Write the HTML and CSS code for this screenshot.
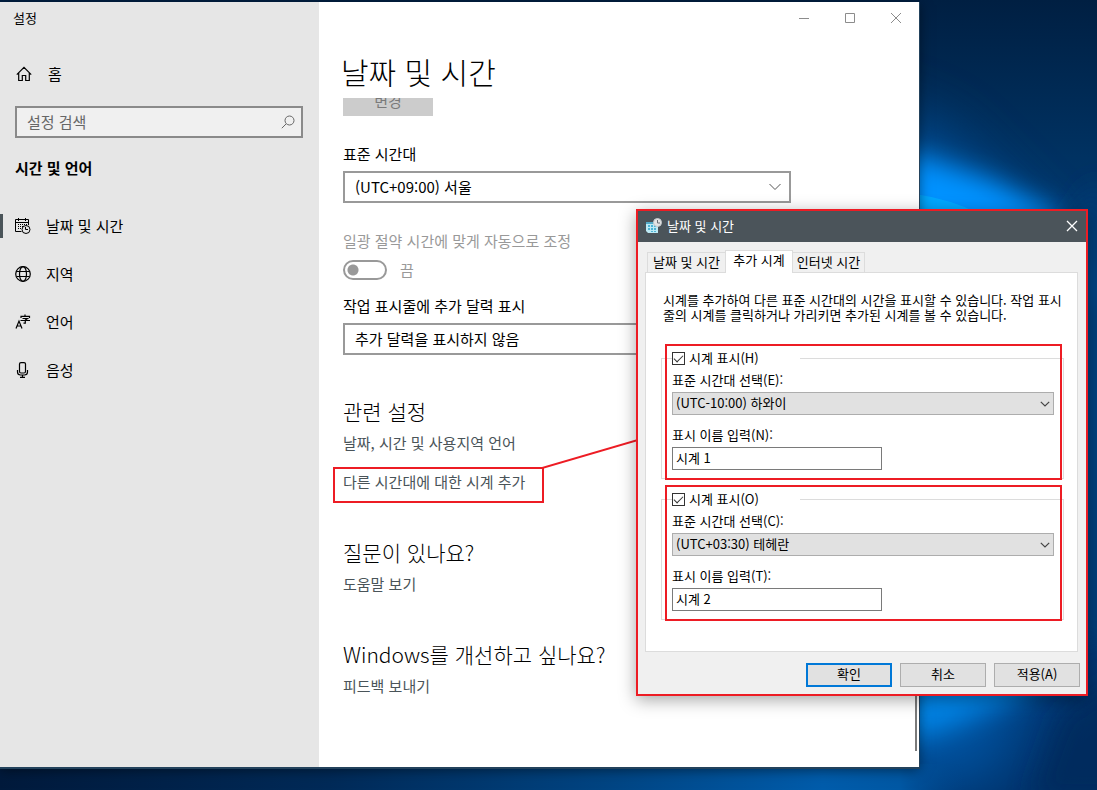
FILE: index.html
```html
<!DOCTYPE html>
<html lang="ko">
<head>
<meta charset="utf-8">
<title>설정</title>
<link rel="stylesheet" href="styles.css">
</head>
<body>
<div class="desktop">
  <svg class="wallpaper" viewBox="0 0 1097 790" preserveAspectRatio="none" aria-hidden="true">
    <defs>
      <linearGradient id="sky" x1="0" y1="0" x2="0" y2="1">
        <stop offset="0" stop-color="#001f42"/><stop offset=".2" stop-color="#003262"/><stop offset=".5" stop-color="#004487"/><stop offset="1" stop-color="#00326a"/>
      </linearGradient>
      <linearGradient id="floor" x1="0" y1="0" x2="1" y2="0">
        <stop offset="0" stop-color="#001a3c"/><stop offset=".3" stop-color="#002a58"/><stop offset=".55" stop-color="#004482"/><stop offset=".75" stop-color="#005cab"/><stop offset=".82" stop-color="#0058a4"/><stop offset=".88" stop-color="#00458a" stop-opacity="0"/>
      </linearGradient>
      <filter id="soft" x="-50%" y="-100%" width="200%" height="300%"><feGaussianBlur stdDeviation="13"/></filter>
      <filter id="wide" x="-50%" y="-100%" width="200%" height="300%"><feGaussianBlur stdDeviation="30"/></filter>
    </defs>
    <rect width="1097" height="790" fill="url(#sky)"/>
    <path d="M800 80L940 130L1060 250H800Z" fill="#0060b8" opacity=".6" filter="url(#wide)"/>
    <path d="M860 140L930 160L990 180L1060 215L1090 300H860Z" fill="#0092ff" filter="url(#soft)"/>
    <path d="M915 194Q950 199 980 214H915Z" fill="#00b0ff" opacity=".7"/>
    <path d="M1100 180V640L1060 640V240Z" fill="#00407c" filter="url(#soft)"/>
    <path d="M860 660H1065L1015 696L950 728L880 750Z" fill="#0096f8" filter="url(#soft)"/>
    <path d="M860 640H1040L1000 780L860 800Z" fill="#0070d0" opacity=".5" filter="url(#wide)"/>
    <path d="M1060 715L1130 670V800H1030Z" fill="#002654" opacity=".6" filter="url(#soft)"/>
    <rect y="764" width="1097" height="26" fill="url(#floor)"/>
  </svg>

  <main class="settings">
    <aside class="sidebar">
      <div class="app-name">설정</div>
      <a class="home" href="#">
        <svg width="16" height="16" viewBox="0 0 16 16"><path d="M.8 8.700L8 1.300L15.200 8.700M2.700 7V14.500H6.300V9.500H9.700V14.500H13.300V7" fill="none" stroke="currentColor" stroke-width="1.200"/></svg>
        <span>홈</span>
      </a>
      <label class="search">
        <input type="text" placeholder="설정 검색" aria-label="설정 검색">
        <svg width="14" height="14" viewBox="0 0 14 14"><circle cx="8.500" cy="5.500" r="4.500" fill="none" stroke="currentColor"/><path d="M5 9L.8 13.200" stroke="currentColor"/></svg>
      </label>
      <h2 class="group-name">시간 및 언어</h2>
      <nav class="nav">
        <a class="nav-item current" href="#">
          <svg width="16" height="16" viewBox="0 0 16 16" fill="none" stroke="currentColor"><path d="M6.500 13.500H.5V1.500H13.500V7M.5 4.500H13.500M3.500 0V3M10.500 0V3"/><path d="M3 6.500H12M3 8.500H8M3 10.500H6" stroke-dasharray="1 1"/><circle cx="11" cy="11.500" r="4"/><path d="M10.500 9V11.500H13"/></svg>
          <span>날짜 및 시간</span>
        </a>
        <a class="nav-item" href="#">
          <svg width="16" height="16" viewBox="0 0 16 16" fill="none" stroke="currentColor" stroke-width="1.200"><circle cx="8" cy="8" r="7.300"/><ellipse cx="8" cy="8" rx="3.500" ry="7.300"/><path d="M1.500 5.500H14.500M1.500 10.500H14.500"/></svg>
          <span>지역</span>
        </a>
        <a class="nav-item" href="#">
          <svg width="16" height="16" viewBox="0 0 16 16" fill="none" stroke="currentColor" stroke-width="1.200"><path d="M1 14.500L4 7L7 14.500M2 12H6"/><path d="M10 .5V2M6 4V2.300H14.500V4M7.500 4.500H12.500L10.300 6V9.200H8.500M5.500 6.500H15"/></svg>
          <span>언어</span>
        </a>
        <a class="nav-item" href="#">
          <svg width="16" height="16" viewBox="0 0 16 16" fill="none" stroke="currentColor" stroke-width="1.200"><rect x="4.500" y=".6" width="6" height="10.400" rx="1.500"/><path d="M2.500 8V10Q2.500 13 5.500 13H9.500Q12.500 13 12.500 10V8M7.500 13V15.500M5 15.400H10"/></svg>
          <span>음성</span>
        </a>
      </nav>
    </aside>

    <section class="page">
      <div class="window-buttons">
        <button type="button" aria-label="최소화"><svg width="10" height="10"><path d="M0 5.500H10" stroke="currentColor"/></svg></button>
        <button type="button" aria-label="최대화"><svg width="10" height="10"><path d="M.5.5H9.500V9.500H.5Z" fill="none" stroke="currentColor"/></svg></button>
        <button type="button" aria-label="닫기"><svg width="10" height="10"><path d="M0 0L10 10M10 0L0 10" stroke="currentColor"/></svg></button>
      </div>
      <div class="content">
        <h1>날짜 및 시간</h1>
        <div class="scrolled"><button type="button" class="change" disabled>변경</button></div>
        <label class="caption" for="zone">표준 시간대</label>
        <div class="picker">
          <select id="zone"><option>(UTC+09:00) 서울</option></select>
          <svg width="12" height="8" viewBox="0 0 12 8"><path d="M.5 1L6 6.500L11.500 1" fill="none" stroke="currentColor"/></svg>
        </div>
        <label class="caption muted" for="dst">일광 절약 시간에 맞게 자동으로 조정</label>
        <div class="switch-row"><input id="dst" class="switch" type="checkbox" disabled><span>끔</span></div>
        <label class="caption caption-calendar" for="calendar">작업 표시줄에 추가 달력 표시</label>
        <div class="picker">
          <select id="calendar"><option>추가 달력을 표시하지 않음</option></select>
          <svg width="12" height="8" viewBox="0 0 12 8"><path d="M.5 1L6 6.500L11.500 1" fill="none" stroke="currentColor"/></svg>
        </div>
        <h2 class="related">관련 설정</h2>
        <a class="link" href="#">날짜, 시간 및 사용지역 언어</a>
        <a class="link marked" href="#">다른 시간대에 대한 시계 추가</a>
        <h2 class="question">질문이 있나요?</h2>
        <a class="link" href="#">도움말 보기</a>
        <h2 class="improve">Windows를 개선하고 싶나요?</h2>
        <a class="link" href="#">피드백 보내기</a>
      </div>
      <div class="scroll-thumb"></div>
    </section>
  </main>

  <svg class="connector" width="96" height="30" viewBox="0 0 96 30" aria-hidden="true"><path d="M0 29L96 1" stroke="#ed1c24" stroke-width="2"/></svg>

  <section class="dialog" role="dialog" aria-labelledby="dialog-title">
    <header class="dialog-bar">
      <svg width="16" height="16" viewBox="0 0 16 16"><path d="M0 4H12V15H2L0 13Z" fill="#bdeaf5"/><path d="M0 4H10V6H0Z" fill="#52aac8"/><path d="M2 7H4V9H2ZM5 7H7V9H5ZM8 7H10V9H8ZM2 10H4V12H2ZM5 10H7V12H5ZM8 10H10V12H8ZM5 13H7V14H5ZM8 13H10V14H8Z" fill="#4db4d6"/><circle cx="11.500" cy="4.500" r="4" fill="#e4e4e4" stroke="#c4c9cc"/><path d="M11.500 2V5H14" fill="none" stroke="#687078"/></svg>
      <span id="dialog-title">날짜 및 시간</span>
      <button type="button" class="dialog-close" aria-label="닫기"><svg width="12" height="12" viewBox="0 0 12 12"><path d="M1 1L11 11M11 1L1 11" stroke="currentColor" stroke-width="1.300"/></svg></button>
    </header>
    <div class="dialog-body">
      <div class="tabs" role="tablist">
        <button type="button" role="tab" class="tab tab-first">날짜 및 시간</button>
        <button type="button" role="tab" class="tab active" aria-selected="true">추가 시계</button>
        <button type="button" role="tab" class="tab tab-last">인터넷 시간</button>
      </div>
      <div class="panel">
        <p>시계를 추가하여 다른 표준 시간대의 시간을 표시할 수 있습니다. 작업 표시<br>줄의 시계를 클릭하거나 가리키면 추가된 시계를 볼 수 있습니다.</p>
        <fieldset class="clock">
          <legend><label class="check"><input type="checkbox" checked>시계 표시(H)</label></legend>
          <label for="zone1">표준 시간대 선택(E):</label>
          <div class="combo"><select id="zone1"><option>(UTC-10:00) 하와이</option></select><svg width="10" height="6" viewBox="0 0 10 6"><path d="M.8.8L5 5L9.200.8" fill="none" stroke="currentColor" stroke-width="1.200"/></svg></div>
          <label class="name-label" for="name1">표시 이름 입력(N):</label>
          <input class="name" id="name1" type="text" value="시계 1">
        </fieldset>
        <fieldset class="clock">
          <legend><label class="check"><input type="checkbox" checked>시계 표시(O)</label></legend>
          <label for="zone2">표준 시간대 선택(C):</label>
          <div class="combo"><select id="zone2"><option>(UTC+03:30) 테헤란</option></select><svg width="10" height="6" viewBox="0 0 10 6"><path d="M.8.8L5 5L9.200.8" fill="none" stroke="currentColor" stroke-width="1.200"/></svg></div>
          <label class="name-label" for="name2">표시 이름 입력(T):</label>
          <input class="name" id="name2" type="text" value="시계 2">
        </fieldset>
      </div>
      <footer class="actions">
        <button type="button" class="default">확인</button>
        <button type="button">취소</button>
        <button type="button">적용(A)</button>
      </footer>
    </div>
  </section>
</div>
</body>
</html>
```

FILE: styles.css
```css
* { box-sizing: border-box; }
body {
  margin: 0;
  font: 15px/20px "Noto Sans CJK KR", sans-serif;
  color: #000;
}
button, input, select { font: inherit; color: inherit; margin: 0; }
button { padding: 0; }
a { color: inherit; text-decoration: none; }
h1, h2, p { margin: 0; font-weight: 400; }
svg { display: block; flex: none; }

.desktop {
  position: relative;
  display: flex;
  min-height: 100vh;
  padding: 2px 178px 23px 0;
  overflow: hidden;
}
.wallpaper { position: absolute; inset: 0; width: 100%; height: 100%; }

/* Settings window */
.settings {
  position: relative;
  display: flex;
  flex: 1;
  background: #fff;
  box-shadow: 0 1px 0 1px #23425c, 0 3px 12px rgba(0, 0, 0, .5);
}
.sidebar { width: 319px; flex: none; background: #e6e6e6; }
.app-name { padding: 6px 13px; font-size: 13px; }
.home {
  display: flex;
  align-items: center;
  gap: 16px;
  margin-top: 16px;
  padding: 0 16px;
  height: 48px;
}
.search {
  display: flex;
  align-items: center;
  height: 32px;
  margin: 8px 16px 0 15px;
  padding: 0 6px 0 10px;
  border: 2px solid #8a8a8a;
  background: #f0f0f0;
  color: #666;
}
.search input {
  flex: 1;
  min-width: 0;
  padding: 0;
  border: 0;
  outline: 0;
  background: none;
}
.search input::placeholder { color: #666; opacity: 1; }
.group-name { margin: 20px 15px 36px; font-size: 15px; line-height: 20px; font-weight: 700; }
.nav-item {
  display: flex;
  align-items: center;
  gap: 15px;
  height: 24px;
  margin-bottom: 24px;
  padding-left: 12px;
  border-left: 3px solid transparent;
}
.nav-item.current { border-color: #4a5459; }

.page { position: relative; flex: 1; min-width: 0; }
.window-buttons { display: flex; justify-content: flex-end; color: #8c8c8c; }
.window-buttons button {
  display: grid;
  place-items: center;
  width: 46px;
  height: 32px;
  border: 0;
  background: none;
}
.content {
  display: flex;
  flex-direction: column;
  align-items: flex-start;
  padding: 20px 24px;
}
h1 { margin-left: -2px; font-size: 30px; line-height: 34px; font-weight: 300; }
.scrolled {
  display: flex;
  align-items: flex-end;
  height: 18px;
  margin-top: 10px;
  overflow: hidden;
}
.change {
  flex: none;
  width: 90px;
  height: 30px;
  border: 0;
  background: #ccc;
  color: #7a7a7a;
}
.caption { margin: 28px 0 7px; }
.caption-calendar { margin-top: 16px; }
.muted { color: #999; }
.picker {
  display: flex;
  align-items: center;
  width: 100%;
  max-width: 448px;
  height: 32px;
  border: 2px solid #999;
  color: #555;
}
.picker select {
  flex: 1;
  height: 28px;
  margin-right: -20px;
  padding: 0 24px 0 10px;
  border: 0;
  background: none;
  appearance: none;
  color: #000;
}
.picker svg { margin-right: 8px; }
.switch-row { display: flex; align-items: center; gap: 13px; height: 20px; margin-top: 2px; color: #999; }
.switch {
  appearance: none;
  width: 44px;
  height: 20px;
  border: 2px solid #999;
  border-radius: 10px;
  background: radial-gradient(circle at 8px 8px, #999 5px, transparent 6px);
}
.content h2 { font-size: 21px; line-height: 28px; margin-bottom: 8px; font-weight: 300; }
.content .related { margin-top: 42px; }
.content .question { margin-top: 35px; }
.content .improve { margin-top: 46px; }
.link { color: #4a5459; }
.marked { margin: 14px 0 0 -10px; padding: 3px 17px 9px 8px; border: 2px solid #ed1c24; }
.scroll-thumb {
  position: absolute;
  right: 2px;
  bottom: 16px;
  width: 2px;
  height: 300px;
  background: #7a7a7a;
}
.connector { position: absolute; left: 542px; top: 439px; }

/* Date and time dialog */
.dialog {
  position: absolute;
  left: 636px;
  top: 209px;
  width: 452px;
  border: 2px solid #ed1c24;
  background: #f0f0f0;
  box-shadow: 0 4px 16px rgba(0, 0, 0, .35);
  font-size: 13px;
  line-height: 16px;
}
.dialog-bar {
  display: flex;
  align-items: center;
  gap: 5px;
  height: 31px;
  padding: 0 8px 1px;
  background: #4b545a;
  color: #fff;
}
.dialog-close { margin-left: auto; border: 0; background: none; }
.dialog-body { padding: 8px 6px 7px 7px; }
.tabs { display: flex; align-items: flex-end; height: 22px; padding-left: 2px; }
.tab {
  height: 20px;
  padding-bottom: 2px;
  border: 1px solid #dcdcdc;
  border-bottom: 0;
  background: #f0f0f0;
}
.tab-first { width: 79px; }
.tab-last { width: 73px; }
.tab.active {
  z-index: 1;
  width: 68px;
  height: 23px;
  margin: 0 -1px -1px;
  padding-bottom: 4px;
  background: #fff;
}
.panel {
  margin-right: 2px;
  padding: 19px 13px 31px 15px;
  border: 1px solid #dcdcdc;
  background: #fff;
}
.panel p { margin: 0 -12px 28px 2px; line-height: 15px; }
.clock {
  position: relative;
  display: flex;
  flex-direction: column;
  min-width: 0;
  margin: 0;
  padding: 0 9px 8px 10px;
  border: 1px solid #dcdcdc;
}
.clock + .clock { margin-top: 12px; }
.clock::after {
  content: "";
  position: absolute;
  inset: -28px 1px -2px 3px;
  border: 2px solid #ed1c24;
  pointer-events: none;
}
.clock > legend { width: 128px; padding: 0; margin-bottom: 6px; background: #fff; }
.check { display: flex; align-items: center; gap: 4px; height: 16px; }
.check input {
  appearance: none;
  display: grid;
  place-items: center;
  width: 13px;
  height: 13px;
  border: 1px solid #333;
  background: #fff;
}
.check input::before {
  content: "";
  width: 8px;
  height: 4px;
  margin-bottom: 2px;
  border: solid #333;
  border-width: 0 0 1px 1px;
  rotate: -45deg;
}
.combo {
  display: flex;
  align-items: center;
  height: 23px;
  margin-top: 4px;
  border: 1px solid #adadad;
  background: #e1e1e1;
  color: #444;
}
.combo select {
  flex: 1;
  height: 21px;
  margin-right: -13px;
  padding: 0 16px 1px 3px;
  border: 0;
  background: none;
  appearance: none;
  color: #000;
}
.combo svg { margin-right: 3px; }
.name-label { margin: 12px 0 4px; }
.name { width: 210px; height: 23px; padding: 0 3px 2px; border: 1px solid #7a7a7a; background: #fff; }
.actions { display: flex; justify-content: flex-end; gap: 8px; margin-top: 11px; }
.actions button {
  width: 86px;
  height: 24px;
  padding-bottom: 2px;
  border: 1px solid #adadad;
  background: #e1e1e1;
}
.actions .default { border: 2px solid #0078d7; }
```
